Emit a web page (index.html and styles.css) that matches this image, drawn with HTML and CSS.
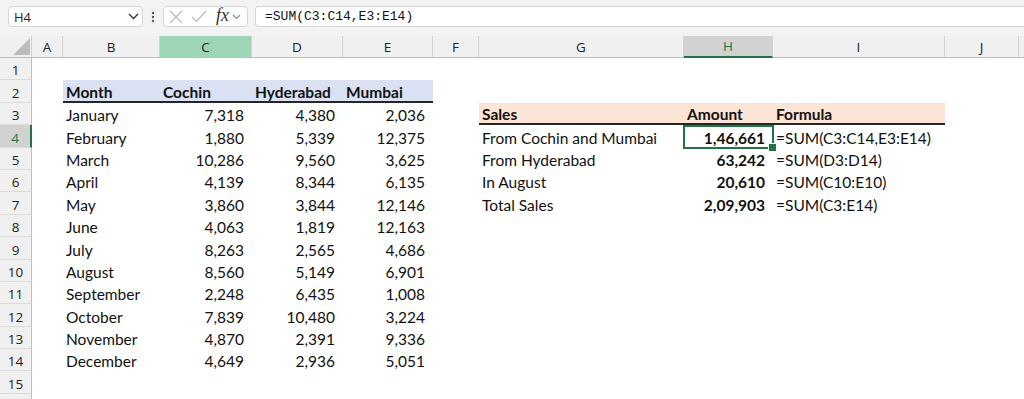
FILE: index.html
```html
<!DOCTYPE html>
<html lang="en">
<head>
    <meta charset="UTF-8">
    <meta name="viewport" content="width=device-width, initial-scale=1.0">
    <title>Sales SUM</title>
    <link rel="stylesheet" href="styles.css">
</head>
<body>
<div class="app">
    <div class="formula-bar">
        <div class="name-box">
            <span>H4</span>
            <svg width="11" height="7" viewBox="0 0 11 7"><path d="M1 1 L5.5 5.5 L10 1" fill="none" stroke="#333" stroke-width="1.3"/></svg>
        </div>
        <div class="dots">
            <svg width="4" height="12" viewBox="0 0 4 12"><circle cx="2" cy="2" r="1.2" fill="#555"/><circle cx="2" cy="6" r="1.2" fill="#555"/><circle cx="2" cy="10" r="1.2" fill="#555"/></svg>
        </div>
        <div class="fx-box">
            <svg class="ic-x" width="14" height="14" viewBox="0 0 14 14"><path d="M1 1 L13 13 M13 1 L1 13" stroke="#b9b9b9" stroke-width="1.2"/></svg>
            <svg class="ic-ok" width="16" height="13" viewBox="0 0 16 13"><path d="M1 7 L5.5 11.5 L15 1" fill="none" stroke="#b9b9b9" stroke-width="1.2"/></svg>
            <span class="fx">fx</span>
            <svg class="ic-chev" width="9" height="6" viewBox="0 0 9 6"><path d="M1 1 L4.5 4.5 L8 1" fill="none" stroke="#8a8a8a" stroke-width="1.1"/></svg>
        </div>
        <div class="formula-input">=SUM(C3:C14,E3:E14)</div>
    </div>

    <table class="sheet">
        <colgroup>
            <col style="width:32px"><col style="width:31px"><col style="width:97px"><col style="width:92px">
            <col style="width:91px"><col style="width:90px"><col style="width:46px"><col style="width:205px">
            <col style="width:89px"><col style="width:172px"><col style="width:74px"><col style="width:60px">
        </colgroup>
        <thead>
            <tr class="col-row">
                <th class="corner"><svg width="32" height="21" viewBox="0 0 32 21"><polygon points="30,2 30,19 13,19" fill="#bcbcbc"/></svg></th>
                <th>A</th><th>B</th><th class="col-sel">C</th><th>D</th><th>E</th><th>F</th><th>G</th>
                <th class="col-act">H</th><th>I</th><th>J</th><th></th>
            </tr>
        </thead>
        <tbody>
            <tr><th>1</th><td></td><td></td><td></td><td></td><td></td><td></td><td></td><td></td><td></td><td></td><td></td></tr>
            <tr><th>2</th><td></td>
                <td class="hd-blue">Month</td><td class="hd-blue">Cochin</td><td class="hd-blue">Hyderabad</td><td class="hd-blue">Mumbai</td>
                <td></td><td></td><td></td><td></td><td></td><td></td></tr>
            <tr><th>3</th><td></td>
                <td>January</td><td class="num">7,318</td><td class="num">4,380</td><td class="num">2,036</td>
                <td></td><td class="hd-peach">Sales</td><td class="hd-peach">Amount</td><td class="hd-peach">Formula</td><td></td><td></td></tr>
            <tr><th class="row-act">4</th><td></td>
                <td>February</td><td class="num">1,880</td><td class="num">5,339</td><td class="num">12,375</td>
                <td></td><td>From Cochin and Mumbai</td><td class="num b sel">1,46,661</td><td>=SUM(C3:C14,E3:E14)</td><td></td><td></td></tr>
            <tr><th>5</th><td></td>
                <td>March</td><td class="num">10,286</td><td class="num">9,560</td><td class="num">3,625</td>
                <td></td><td>From Hyderabad</td><td class="num b">63,242</td><td>=SUM(D3:D14)</td><td></td><td></td></tr>
            <tr><th>6</th><td></td>
                <td>April</td><td class="num">4,139</td><td class="num">8,344</td><td class="num">6,135</td>
                <td></td><td>In August</td><td class="num b">20,610</td><td>=SUM(C10:E10)</td><td></td><td></td></tr>
            <tr><th>7</th><td></td>
                <td>May</td><td class="num">3,860</td><td class="num">3,844</td><td class="num">12,146</td>
                <td></td><td>Total Sales</td><td class="num b">2,09,903</td><td>=SUM(C3:E14)</td><td></td><td></td></tr>
            <tr><th>8</th><td></td>
                <td>June</td><td class="num">4,063</td><td class="num">1,819</td><td class="num">12,163</td>
                <td></td><td></td><td></td><td></td><td></td><td></td></tr>
            <tr><th>9</th><td></td>
                <td>July</td><td class="num">8,263</td><td class="num">2,565</td><td class="num">4,686</td>
                <td></td><td></td><td></td><td></td><td></td><td></td></tr>
            <tr><th>10</th><td></td>
                <td>August</td><td class="num">8,560</td><td class="num">5,149</td><td class="num">6,901</td>
                <td></td><td></td><td></td><td></td><td></td><td></td></tr>
            <tr><th>11</th><td></td>
                <td>September</td><td class="num">2,248</td><td class="num">6,435</td><td class="num">1,008</td>
                <td></td><td></td><td></td><td></td><td></td><td></td></tr>
            <tr><th>12</th><td></td>
                <td>October</td><td class="num">7,839</td><td class="num">10,480</td><td class="num">3,224</td>
                <td></td><td></td><td></td><td></td><td></td><td></td></tr>
            <tr><th>13</th><td></td>
                <td>November</td><td class="num">4,870</td><td class="num">2,391</td><td class="num">9,336</td>
                <td></td><td></td><td></td><td></td><td></td><td></td></tr>
            <tr><th>14</th><td></td>
                <td>December</td><td class="num">4,649</td><td class="num">2,936</td><td class="num">5,051</td>
                <td></td><td></td><td></td><td></td><td></td><td></td></tr>
            <tr><th>15</th><td></td><td></td><td></td><td></td><td></td><td></td><td></td><td></td><td></td><td></td><td></td></tr>
            <tr><th></th><td></td><td></td><td></td><td></td><td></td><td></td><td></td><td></td><td></td><td></td><td></td></tr>
        </tbody>
    </table>
</div>
</body>
</html>
```

FILE: styles.css
```css
* {
    box-sizing: border-box;
}
body {
    margin: 0;
    background: #fff;
    overflow: hidden;
    font-family: Lato, "Liberation Sans", sans-serif;
    color: #111;
}
.app {
    width: 1024px;
    height: 399px;
    overflow: hidden;
}

/* formula bar */
.formula-bar {
    height: 36px;
    background: #f3f3f3;
    display: flex;
    align-items: flex-start;
    padding: 6px 0 0 8px;
}
.name-box {
    width: 135px;
    height: 21px;
    background: #fff;
    border: 1px solid #d6d6d6;
    border-radius: 4px;
    display: flex;
    align-items: center;
    justify-content: space-between;
    padding: 0 3px 0 5px;
    font: 13px "Open Sans", sans-serif;
    color: #222;
}
.dots {
    width: 20px;
    height: 21px;
    display: flex;
    align-items: center;
    justify-content: center;
}
.fx-box {
    width: 85px;
    height: 21px;
    background: #fff;
    border: 1px solid #d6d6d6;
    border-radius: 4px;
    display: flex;
    align-items: center;
    padding-left: 5px;
}
.ic-x {
    margin-right: 8px;
}
.ic-ok {
    margin-right: 9px;
}
.fx {
    font: italic 18px "Liberation Serif", serif;
    color: #333;
    margin-top: -3px;
    margin-right: 3px;
}
.formula-input {
    flex: 1;
    height: 21px;
    margin-left: 7px;
    background: #fff;
    border: 1px solid #d6d6d6;
    border-right: none;
    border-radius: 4px 0 0 4px;
    padding-left: 9px;
    font: 13px "Liberation Mono", monospace;
    line-height: 19px;
    color: #111;
}

/* grid */
.sheet {
    table-layout: fixed;
    width: 1079px;
    border-collapse: separate;
    border-spacing: 0;
}
.sheet th {
    font: 13.5px "Open Sans", sans-serif;
    font-weight: normal;
    color: #222;
    background: #f0f0f0;
    padding: 0;
    text-align: center;
}
.col-row {
    height: 21px;
}
.col-row th {
    border-right: 1px solid #d2d2d2;
    border-bottom: 1px solid #bdbdbd;
    line-height: 20px;
    vertical-align: middle;
}
.col-row .corner {
    line-height: 0;
    vertical-align: top;
}
.col-row .col-sel {
    background: #9fd5b7;
}
.col-row .col-act {
    background: #d2d2d2;
    color: #217346;
    border-bottom: 2px solid #217346;
}
tbody tr {
    height: 22.4px;
}
tbody th {
    border-bottom: 1px solid #dadada;
    border-right: 1px solid #bdbdbd;
    line-height: 16px;
    vertical-align: bottom;
    padding-bottom: 1px;
}
tbody th.row-act {
    background: #d2d2d2;
    color: #217346;
    border-right: 2px solid #217346;
}
.sheet td {
    padding: 0 3px 2px;
    font-size: 15.5px;
    line-height: 16px;
    vertical-align: bottom;
    white-space: nowrap;
}
.sheet td.num {
    text-align: right;
    padding-right: 8px;
}
.sheet td.b {
    font-weight: bold;
}
.sheet td.hd-blue,
.sheet td.hd-peach {
    border-bottom: 2px solid #262626;
    font-weight: bold;
    padding-bottom: 1px;
}
.hd-blue {
    background: #d9e1f2;
}
.hd-peach {
    background: #fce4d6;
}
.sel {
    position: relative;
}
.sel::before {
    content: "";
    position: absolute;
    left: -1px;
    top: 0;
    right: -1px;
    bottom: -1px;
    border: 2px solid #217346;
}
.sel::after {
    content: "";
    position: absolute;
    right: -4px;
    bottom: -4px;
    width: 7px;
    height: 7px;
    background: #217346;
    border: 1px solid #fff;
}
```
